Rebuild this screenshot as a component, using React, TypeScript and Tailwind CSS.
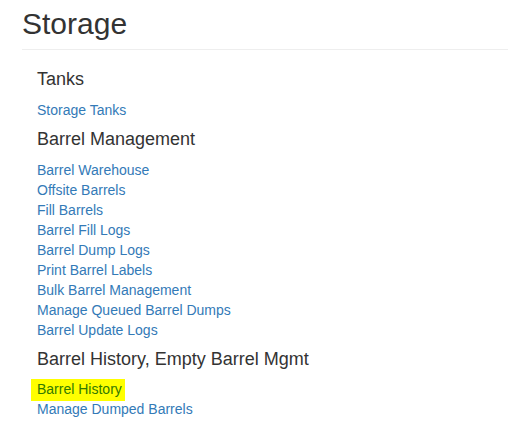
const sections = [
  { title: "Tanks", links: ["Storage Tanks"] },
  {
    title: "Barrel Management",
    links: [
      "Barrel Warehouse",
      "Offsite Barrels",
      "Fill Barrels",
      "Barrel Fill Logs",
      "Barrel Dump Logs",
      "Print Barrel Labels",
      "Bulk Barrel Management",
      "Manage Queued Barrel Dumps",
      "Barrel Update Logs",
    ],
  },
  {
    title: "Barrel History, Empty Barrel Mgmt",
    links: ["Barrel History", "Manage Dumped Barrels"],
  },
];

export default function App() {
  return (
    <div className="min-h-[423px] w-[508px] bg-white pl-[22px] text-[#333] font-['Liberation_Sans',Arial,sans-serif]">
      <h1 className="mt-[7px] border-b border-[#eee] pb-[9px] text-[30px] leading-[1.1]">Storage</h1>
      <div className="pl-[15px] pt-[10px]">
        {sections.map((s) => (
          <div key={s.title}>
            <h4 className="mt-[10px] mb-[10px] text-[18px] leading-[1.1]">{s.title}</h4>
            <ul>
              {s.links.map((l) => (
                <li key={l} className="text-[14px] leading-[20px]">
                  {l === "Barrel History" ? (
                    <a className="-ml-[6px] bg-[#ffff00] pt-[2px] pb-[4px] pl-[6px] pr-[3px] text-[#337a00]">{l}</a>
                  ) : (
                    <a className="text-[#337ab7]">{l}</a>
                  )}
                </li>
              ))}
            </ul>
          </div>
        ))}
      </div>
    </div>
  );
}
